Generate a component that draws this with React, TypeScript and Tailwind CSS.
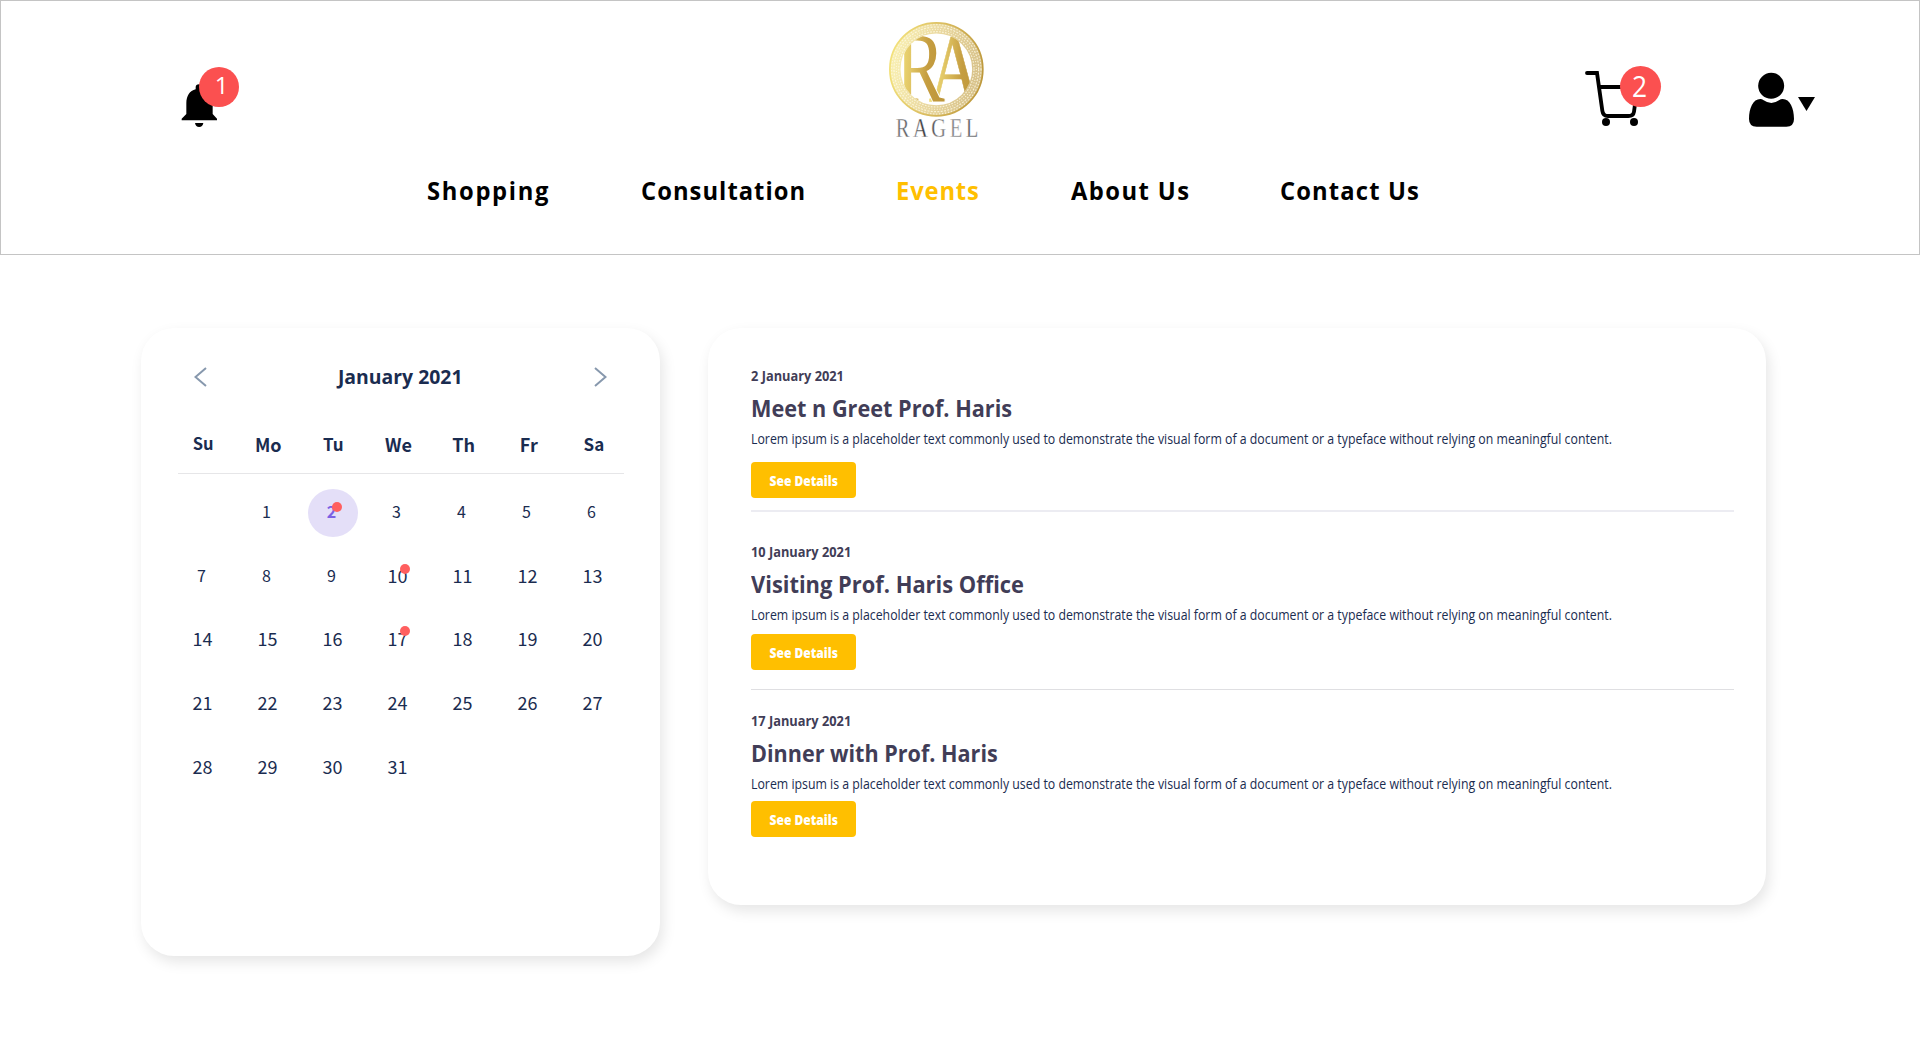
type EventItem = {
  date: string;
  title: string;
  titleScale: string;
  buttonGap: string;
  divider?: string;
};

const DESCRIPTION =
  "Lorem ipsum is a placeholder text commonly used to demonstrate the visual form of a document or a typeface without relying on meaningful content.";

const NAV = [
  { label: "Shopping", spacing: "tracking-[1.75px]" },
  { label: "Consultation", spacing: "tracking-[1.1px]" },
  { label: "Events", spacing: "tracking-[0.9px]", active: true },
  { label: "About Us", spacing: "tracking-[1.5px]" },
  { label: "Contact Us", spacing: "tracking-[1.2px]" },
];

const WEEKDAYS = [
  { label: "Su", size: "text-[16.5px] pb-0.5" },
  { label: "Mo", size: "text-[18px]" },
  { label: "Tu", size: "text-[17px] pb-px" },
  { label: "We", size: "text-[18px]" },
  { label: "Th", size: "text-[18px]" },
  { label: "Fr", size: "text-[18px]" },
  { label: "Sa", size: "text-[17px] pb-px" },
];

const WEEKS: (number | null)[][] = [
  [null, 1, 2, 3, 4, 5, 6],
  [7, 8, 9, 10, 11, 12, 13],
  [14, 15, 16, 17, 18, 19, 20],
  [21, 22, 23, 24, 25, 26, 27],
  [28, 29, 30, 31, null, null, null],
];

const MARKERS: Record<number, string> = {
  2: "left-[31.5px] top-[22.6px]",
  10: "left-[35.3px] top-[20.9px]",
  17: "left-[35.3px] top-[19.2px]",
};

const EVENTS: EventItem[] = [
  {
    date: "2 January 2021",
    title: "Meet n Greet Prof. Haris",
    titleScale: "scale-x-[0.922]",
    buttonGap: "mt-[13.5px]",
    divider: "mt-3 mb-[30px] h-0.5 bg-[#ececf2]",
  },
  {
    date: "10 January 2021",
    title: "Visiting Prof. Haris Office",
    titleScale: "scale-x-[0.931]",
    buttonGap: "mt-[9.5px]",
    divider: "mt-[19px] mb-[21px] h-px bg-[#dfdfe2]",
  },
  { date: "17 January 2021", title: "Dinner with Prof. Haris", titleScale: "scale-x-[0.918]", buttonGap: "mt-[7.5px]" },
];

function BellIcon() {
  return (
    <svg className="h-[90px] w-[100px]" viewBox="0 0 300 270">
      <path d="M107 118 V112 Q107 103 117 103 Q127 103 127 112 V118 C147 122 158 138 158 160 V192 L171 206 V211 H65 V206 L79 192 V160 C79 138 89 122 107 118 Z" />
      <path d="M105 219 H130 Q128 231 117.500 231 Q107 231 105 219 Z" />
    </svg>
  );
}

function CartIcon() {
  return (
    <svg className="h-[90px] w-[140px]" viewBox="0 0 420 270" fill="none" stroke="#000" strokeWidth="11.500">
      <path d="M81 69 H111 L127 182 Q129 198 144 198 H205 Q220 198 222 185 L232 111 H118" strokeLinecap="round" />
      <circle cx="138" cy="216" r="12" fill="#000" stroke="none" />
      <circle cx="222" cy="216" r="12" fill="#000" stroke="none" />
    </svg>
  );
}

function UserIcon() {
  return (
    <svg className="h-[90px] w-[140px]" viewBox="420 0 420 270">
      <circle cx="633.500" cy="107.500" r="39" />
      <path d="M601 147 Q606 147 611 151 Q634 167 657 151 Q662 147 668 147 C690 147 702 175 702 207 Q702 230 679 230 H590 Q567 230 567 207 C567 175 579 147 601 147 Z" />
      <path d="M714 141 H765 L739.500 183 Z" />
    </svg>
  );
}

function Logo() {
  return (
    <svg className="h-[140px] w-[130px]" viewBox="0 0 390 420">
      <defs>
        <linearGradient id="ring" x1="0" x2="1" y1="0.400" y2="0.600">
          <stop offset="0" stopColor="#f3e27c" />
          <stop offset="0.450" stopColor="#dcbf62" />
          <stop offset="1" stopColor="#bd983b" />
        </linearGradient>
        <linearGradient id="letters" x1="0" x2="1" y1="0.400" y2="0.500">
          <stop offset="0" stopColor="#f3e27c" />
          <stop offset="0.300" stopColor="#e2c766" />
          <stop offset="0.650" stopColor="#c59d40" />
          <stop offset="1" stopColor="#bd963a" />
        </linearGradient>
        <linearGradient id="wordmark" x1="0" x2="1" y1="0" y2="0">
          <stop offset="0" stopColor="#77777a" />
          <stop offset="0.350" stopColor="#3c3c40" />
          <stop offset="0.650" stopColor="#8b8b8e" />
          <stop offset="1" stopColor="#4c4c50" />
        </linearGradient>
        <clipPath id="inner">
          <circle cx="199" cy="178" r="108" />
        </clipPath>
      </defs>
      <circle cx="199" cy="178" r="123.500" fill="none" stroke="url(#ring)" strokeWidth="32" opacity="0.600" />
      <g fill="none" stroke="#fffbe6" strokeWidth="3.500" opacity="0.800">
        <circle cx="199" cy="178" r="113" strokeDasharray="5 4" />
        <circle cx="199" cy="178" r="120" strokeDasharray="3 5" />
        <circle cx="199" cy="178" r="127" strokeDasharray="6 4" />
        <circle cx="199" cy="178" r="134" strokeDasharray="4 5" />
      </g>
      <circle cx="199" cy="178" r="139.500" fill="none" stroke="url(#ring)" strokeWidth="5" />
      <g clipPath="url(#inner)" fill="url(#letters)" className="font-['Liberation_Serif']">
        <text
          transform="translate(176 272) scale(0.740 1)"
          fontSize="290"
          stroke="url(#letters)"
          strokeWidth="2"
        >
          A
        </text>
        <text
          transform="translate(78 272) scale(0.740 1)"
          fontSize="296"
          stroke="#fff"
          strokeWidth="7"
          className="[paint-order:stroke]"
        >
          R
        </text>
      </g>
      <text
        transform="translate(77 382) scale(0.780 1)"
        textLength="318"
        fontSize="79"
        fill="url(#wordmark)"
        stroke="#fff"
        strokeWidth="1"
        className="font-['Liberation_Serif']"
      >
        RAGEL
      </text>
    </svg>
  );
}

function Chevron({ flip }: { flip?: boolean }) {
  return (
    <svg
      className={flip ? "h-5 w-[13px] -scale-x-100" : "h-5 w-[13px]"}
      viewBox="0 0 13 20"
      fill="none"
      stroke="#8798ad"
      strokeWidth="2"
    >
      <path d="M12 1 L1.500 10 L12 19" />
    </svg>
  );
}

function Header() {
  return (
    <header className="h-[255px] border border-[#c4c4c4] bg-white">
      <div className="flex h-[172px] items-start pl-[159px] pt-[9px]">
        <div className="relative mt-10">
          <BellIcon />
          <span className="absolute left-[39px] top-[17px] flex size-10 items-center justify-center rounded-full bg-[#fb5050] pb-[4px] pl-[5px] text-2xl leading-none text-white">
            1
          </span>
        </div>
        <div className="ml-[610px]">
          <Logo />
        </div>
        <div className="relative ml-[560px] mt-10">
          <CartIcon />
          <span className="absolute left-[60px] top-4 flex size-[41px] items-center justify-center rounded-full bg-[#fb5050] pb-0.5 pr-px text-[30px] leading-none text-white">
            <span className="scale-x-[0.88]">2</span>
          </span>
        </div>
        <div className="mt-10">
          <UserIcon />
        </div>
      </div>
      <nav className="grid grid-cols-[214px_254.5px_175px_209.5px_auto] justify-items-start whitespace-nowrap pl-[426px] text-[25px] font-bold leading-[34px]">
        {NAV.map((item) => (
          <a
            key={item.label}
            className={`origin-left scale-x-[0.95] ${item.spacing} ${item.active ? "text-[#ffbf00]" : "text-black"}`}
          >
            {item.label}
          </a>
        ))}
      </nav>
    </header>
  );
}

function DayCell({ day }: { day: number | null }) {
  if (day === null) return <div />;
  const marker = MARKERS[day];
  const selected = day === 2;
  return (
    <div className="relative flex items-center justify-center">
      {selected && <span className="absolute left-[7.5px] top-[9.6px] h-12 w-[50px] rounded-[50%] bg-[#e4dff8]" />}
      <span
        className={`relative ${day < 10 ? "pr-[2px] text-[16px]" : "text-[18px]"} ${
          selected ? "font-bold text-[#7b61e4]" : ""
        }`}
      >
        {day}
      </span>
      {marker && <span className={`absolute size-2.5 rounded-full bg-[#ff5f5f] ${marker}`} />}
    </div>
  );
}

function Calendar() {
  return (
    <section className="h-[628px] w-[519px] rounded-[33px] bg-white pt-[35px] text-[#1a2c50] shadow-[3px_6px_14px_rgba(0,0,0,0.1)]">
      <div className="flex h-7 items-center justify-between px-[53px]">
        <Chevron />
        <h2 className="scale-x-[0.97] text-[20px] font-bold leading-7">January 2021</h2>
        <Chevron flip />
      </div>
      <div className="ml-[29.5px] mt-[38px] grid h-7 w-[456px] grid-cols-7 font-['Noto_Sans_CJK_SC',sans-serif] font-bold">
        {WEEKDAYS.map((day) => (
          <div key={day.label} className={`flex items-center justify-center leading-7 ${day.size}`}>
            {day.label}
          </div>
        ))}
      </div>
      <div className="ml-[37px] mt-4 h-px w-[446px] bg-[#e6e6e8]" />
      <div className="ml-[29px] w-[455px] pt-[5.4px] font-['Noto_Sans_CJK_SC',sans-serif]">
        {WEEKS.map((week, row) => (
          <div key={row} className="grid h-[63.75px] grid-cols-7">
            {week.map((day, col) => (
              <DayCell key={col} day={day} />
            ))}
          </div>
        ))}
      </div>
    </section>
  );
}

function EventRow({ event }: { event: EventItem }) {
  return (
    <article className="flex flex-col items-start whitespace-nowrap">
      <p className="origin-left scale-x-[0.915] text-[14px] font-bold leading-5 text-[#413d57]">{event.date}</p>
      <h3 className={`mt-[5.5px] origin-left text-[23.5px] font-bold leading-8 text-[#413d57] ${event.titleScale}`}>
        {event.title}
      </h3>
      <p className="mt-[5px] origin-left scale-x-[0.88] text-[14px] leading-5 text-[#1a2c50]">{DESCRIPTION}</p>
      <button className={`h-9 w-[105px] rounded bg-[#ffbf00] pl-px text-[14px] font-extrabold text-white ${event.buttonGap}`}>
        <span className="inline-block scale-x-[0.86]">See Details</span>
      </button>
      {event.divider && <div className={`w-[983px] ${event.divider}`} />}
    </article>
  );
}

export default function App() {
  return (
    <div className="h-[1059px] w-[1920px] overflow-hidden bg-white font-['Open_Sans',sans-serif]">
      <Header />
      <main className="mt-[73px] flex items-start gap-12 pl-[141px]">
        <Calendar />
        <section className="h-[577px] w-[1058px] rounded-[33px] bg-white pl-[43px] pt-[38px] shadow-[3px_6px_14px_rgba(0,0,0,0.1)]">
          {EVENTS.map((event) => (
            <EventRow key={event.title} event={event} />
          ))}
        </section>
      </main>
    </div>
  );
}
